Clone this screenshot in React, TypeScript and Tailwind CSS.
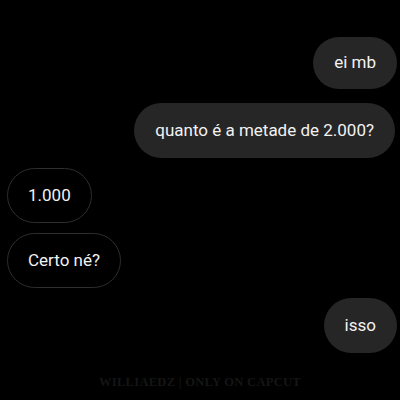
import React from "react";

const font = { fontFamily: "Roboto, 'Liberation Sans', sans-serif" };

export default function App() {
  return (
    <div className="w-[400px] h-[400px] bg-black overflow-hidden relative" style={font}>
      <div className="flex flex-col pt-[37px] pl-[7px] pr-[3px]">
        <div className="flex justify-end">
          <div className="h-[52px] px-[21px] rounded-full bg-[#262626] text-[#f2f2f2] text-[17px] flex items-center">ei mb</div>
        </div>
        <div className="flex justify-end mt-[14px] pr-[2px]">
          <div className="h-[55px] px-[21px] rounded-full bg-[#262626] text-[#f2f2f2] text-[17px] flex items-center">quanto é a metade de 2.000?</div>
        </div>
        <div className="flex justify-start mt-[10px]">
          <div className="h-[55px] px-[20px] rounded-full border border-[#2e2e2e] text-[#f2f2f2] text-[17px] flex items-center">1.000</div>
        </div>
        <div className="flex justify-start mt-[10px]">
          <div className="h-[55px] px-[20px] rounded-full border border-[#2e2e2e] text-[#f2f2f2] text-[17px] flex items-center">Certo né?</div>
        </div>
        <div className="flex justify-end mt-[10px]">
          <div className="h-[55px] px-[21px] rounded-full bg-[#262626] text-[#f2f2f2] text-[17px] flex items-center">isso</div>
        </div>
      </div>
      <div className="absolute left-0 right-0 top-[373px] flex justify-center">
        <span className="text-[12.5px] font-bold tracking-[0.3px] text-[#151515]" style={{ fontFamily: "'Liberation Serif', serif" }}>WILLIAEDZ | ONLY ON CAPCUT</span>
      </div>
    </div>
  );
}
